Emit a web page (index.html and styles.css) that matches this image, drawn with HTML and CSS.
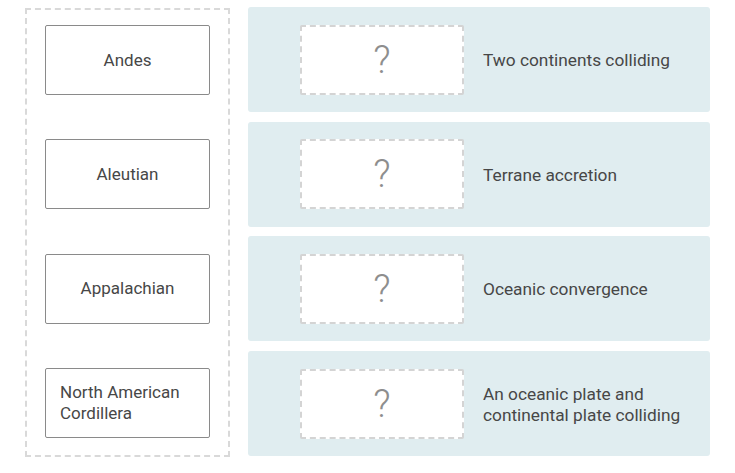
FILE: index.html
```html
<!DOCTYPE html>
<html>
<head>
<meta charset="utf-8">
<link rel="stylesheet" href="styles.css">
</head>
<body>
<div class="board">
  <div class="bank">
    <div class="card"><span>Andes</span></div>
    <div class="card"><span>Aleutian</span></div>
    <div class="card"><span>Appalachian</span></div>
    <div class="card"><span>North American Cordillera</span></div>
  </div>
  <div class="targets">
    <div class="row">
      <div class="drop">?</div>
      <div class="label">Two continents colliding</div>
    </div>
    <div class="row">
      <div class="drop">?</div>
      <div class="label">Terrane accretion</div>
    </div>
    <div class="row">
      <div class="drop">?</div>
      <div class="label">Oceanic convergence</div>
    </div>
    <div class="row">
      <div class="drop">?</div>
      <div class="label">An oceanic plate and continental plate colliding</div>
    </div>
  </div>
</div>
</body>
</html>
```
FILE: styles.css
```css
html, body {
  margin: 0;
  padding: 0;
  background: #ffffff;
}
body {
  font-family: Roboto, "Liberation Sans", Arial, sans-serif;
  color: #333333;
}
.board {
  display: flex;
  align-items: flex-start;
  padding: 7px 0 0 25px;
  gap: 18px;
}
.bank {
  width: 205px;
  margin-top: 1px;
  border: 2px dashed #d9d9d9;
  padding: 15px 18px 16px 18px;
  display: flex;
  flex-direction: column;
  gap: 44.4px;
  box-sizing: border-box;
  height: 449px;
}
.card {
  height: 70px;
  border: 1px solid #8a8a8a;
  border-radius: 2px;
  background: #fff;
  box-sizing: border-box;
  padding: 0 14px;
  display: flex;
  align-items: center;
  justify-content: center;
  font-size: 17px;
  line-height: 21px;
  color: #474747;
}
.targets {
  width: 462px;
  display: flex;
  flex-direction: column;
  gap: 9.7px;
}
.row {
  height: 105px;
  background: #e0edf0;
  border-radius: 3px;
  display: flex;
  align-items: center;
  padding-left: 52px;
  box-sizing: border-box;
}
.drop {
  width: 164px;
  height: 70px;
  box-sizing: border-box;
  background: #ffffff;
  border: 2px dashed #d4d4d4;
  border-radius: 2px;
  display: flex;
  align-items: center;
  justify-content: center;
  font-size: 38px;
  font-weight: 300;
  color: #8e8e8e;
  flex: none;
}
.label {
  margin-left: 19px;
  margin-top: 2px;
  width: 210px;
  font-size: 17.3px;
  line-height: 21px;
  color: #474747;
}
```
